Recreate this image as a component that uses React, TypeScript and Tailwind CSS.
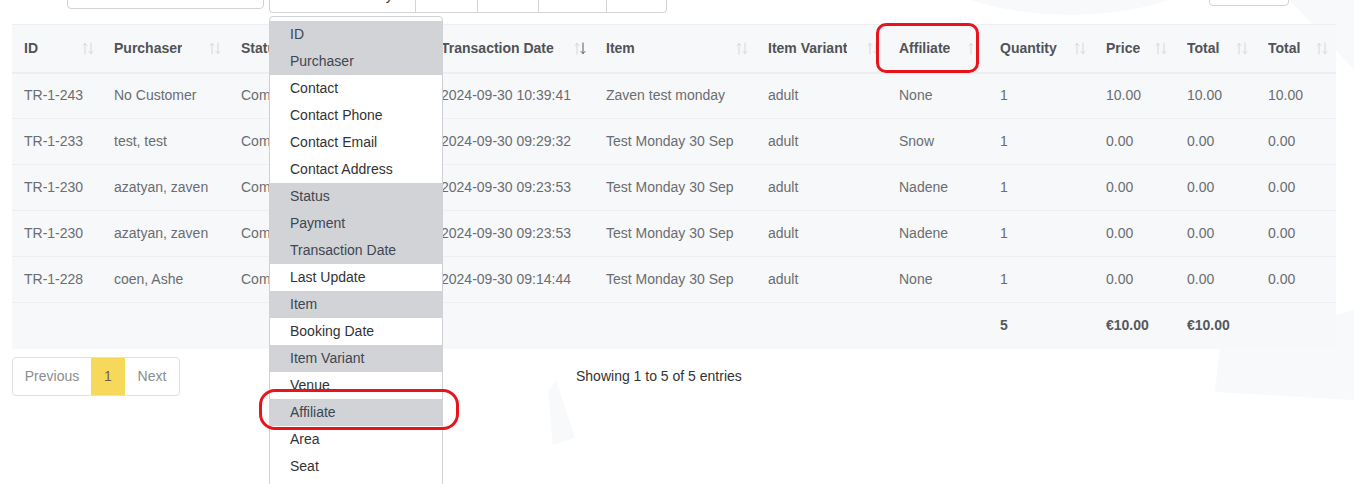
import React from "react";

type Col = { label: string; width: number; sort: "both" | "desc" | "up" };

const columns: Col[] = [
  { label: "ID", width: 90, sort: "both" },
  { label: "Purchaser", width: 127, sort: "both" },
  { label: "Status", width: 200, sort: "both" },
  { label: "Transaction Date", width: 165, sort: "desc" },
  { label: "Item", width: 162, sort: "both" },
  { label: "Item Variant", width: 131, sort: "both" },
  { label: "Affiliate", width: 101, sort: "up" },
  { label: "Quantity", width: 106, sort: "both" },
  { label: "Price", width: 81, sort: "both" },
  { label: "Total", width: 81, sort: "both" },
  { label: "Total", width: 80, sort: "both" },
];

const rows = [
  ["TR-1-243", "No Customer", "Completed", "2024-09-30 10:39:41", "Zaven test monday", "adult", "None", "1", "10.00", "10.00", "10.00"],
  ["TR-1-233", "test, test", "Completed", "2024-09-30 09:29:32", "Test Monday 30 Sep", "adult", "Snow", "1", "0.00", "0.00", "0.00"],
  ["TR-1-230", "azatyan, zaven", "Completed", "2024-09-30 09:23:53", "Test Monday 30 Sep", "adult", "Nadene", "1", "0.00", "0.00", "0.00"],
  ["TR-1-230", "azatyan, zaven", "Completed", "2024-09-30 09:23:53", "Test Monday 30 Sep", "adult", "Nadene", "1", "0.00", "0.00", "0.00"],
  ["TR-1-228", "coen, Ashe", "Completed", "2024-09-30 09:14:44", "Test Monday 30 Sep", "adult", "None", "1", "0.00", "0.00", "0.00"],
];

const menu: [string, boolean][] = [
  ["ID", true],
  ["Purchaser", true],
  ["Contact", false],
  ["Contact Phone", false],
  ["Contact Email", false],
  ["Contact Address", false],
  ["Status", true],
  ["Payment", true],
  ["Transaction Date", true],
  ["Last Update", false],
  ["Item", true],
  ["Booking Date", false],
  ["Item Variant", true],
  ["Venue", false],
  ["Affiliate", true],
  ["Area", false],
  ["Seat", false],
  ["Row", false],
];

function SortIcon({ sort }: { sort: Col["sort"] }) {
  const down = sort === "desc" ? "#555a60" : "#d4d6da";
  return (
    <svg width="12" height="13" viewBox="0 0 12 13" className="shrink-0">
      <g fill="none" strokeWidth="1" strokeLinecap="round">
        <path d="M3 12V1.5M1 3.5L3 1.5L5 3.5" stroke="#d4d6da" />
        {sort !== "up" && <path d="M9 1v10.5M7 9.5l2 2 2-2" stroke={down} />}
      </g>
    </svg>
  );
}

export default function App() {
  return (
    <div className="relative w-[1354px] h-[484px] overflow-hidden bg-white font-['Liberation_Sans',Arial,sans-serif] text-[14px]">
      {/* faint watermark behind the page */}
      <svg className="absolute inset-0" width="1354" height="484" viewBox="0 0 1354 484">
        <g fill="#f8f9fb">
          <ellipse cx="1070" cy="-150" rx="240" ry="165" />
          <path d="M1290 0L1354 0L1354 70Z" />
          <path d="M548 392L556 380L575 438L553 445Z" />
          <path d="M1220 345L1354 310L1354 400L1215 392Z" />
        </g>
      </svg>

      <div className="relative pt-px">
        {/* toolbar, scrolled partly out of view */}
        <div className="flex items-start -mt-[22px] h-[37px]">
          <div className="ml-[67px] w-[197px] h-[30px] border border-[#d2d4d8] rounded-[4px] bg-white" />
          <div className="ml-[5px] flex h-[34px] border border-[#d2d4d8] rounded-[4px] bg-white text-[#333] text-[14px] leading-[16px]">
            {[
              ["Column visibility", 146],
              ["CSV", 62],
              ["PDF", 61],
              ["Excel", 68],
              ["Print", 60],
            ].map(([label, w], i) => (
              <div
                key={label as string}
                style={{ width: (w as number) - (i === 0 ? 1 : 0) }}
                className={`flex items-end justify-center pb-[9px] ${i > 0 ? "border-l border-[#d2d4d8]" : ""}`}
              >
                {label}
              </div>
            ))}
          </div>
          <div className="ml-auto mr-[65px] w-[80px] h-[27px] border border-[#d2d4d8] rounded-[4px] bg-white" />
        </div>

        {/* table */}
        <div className="mx-[12px] mt-[8px]">
          <table className="table-fixed w-[1324px] border-collapse bg-[#f7f8fa]/95">
            <colgroup>
              {columns.map((c, i) => (
                <col key={i} style={{ width: c.width }} />
              ))}
            </colgroup>
            <thead>
              <tr className="h-[48px] border-t border-[#eceef1] border-b-2 border-b-[#eceef1]">
                {columns.map((c, i) => (
                  <th key={i} className="pl-[12px] pr-[8px] text-left align-middle">
                    <div className="flex items-center justify-between font-bold text-[14px] text-[#505357]">
                      <span className="truncate">{c.label}</span>
                      <SortIcon sort={c.sort} />
                    </div>
                  </th>
                ))}
              </tr>
            </thead>
            <tbody>
              {rows.map((r, ri) => (
                <tr key={ri} className="h-[46px] border-b border-[#eceef1]">
                  {r.map((v, ci) => (
                    <td key={ci} className="pl-[12px] text-[#6a6d71] whitespace-nowrap overflow-hidden">
                      {v}
                    </td>
                  ))}
                </tr>
              ))}
            </tbody>
            <tfoot>
              <tr className="h-[46px]">
                <td colSpan={7} />
                <td className="pl-[12px] font-bold text-[#55585c]">5</td>
                <td className="pl-[12px] font-bold text-[#55585c]">€10.00</td>
                <td className="pl-[12px] font-bold text-[#55585c]">€10.00</td>
                <td />
              </tr>
            </tfoot>
          </table>
        </div>

        {/* pagination + info */}
        <div className="flex items-center mt-[8px] ml-[12px]">
          <div className="flex h-[39px] border border-[#dfe1e4] rounded-[4px] overflow-hidden text-[14px] text-[#8a8d91] bg-white">
            <div className="w-[78px] flex items-center justify-center">Previous</div>
            <div className="w-[34px] flex items-center justify-center bg-[#f6d95b] text-[#6b6440]">1</div>
            <div className="w-[54px] flex items-center justify-center">Next</div>
          </div>
          <div className="ml-[396px] text-[#333]">Showing 1 to 5 of 5 entries</div>
        </div>
      </div>

      {/* column visibility dropdown */}
      <div className="absolute left-[269px] top-[16px] w-[174px] h-[490px] bg-white border border-[#cfd1d5] rounded-t-[4px] pt-[4px]">
        {menu.map(([label, active]) => (
          <div
            key={label}
            className={`h-[27px] flex items-center pl-[20px] ${active ? "bg-[#d2d3d7] text-[#3d4652]" : "text-[#333]"}`}
          >
            {label}
          </div>
        ))}
      </div>

      {/* red annotations */}
      <div className="absolute left-[876px] top-[23px] w-[103px] h-[50px] border-[3px] border-[#e8141c] rounded-[10px]" />
      <div className="absolute left-[259px] top-[389px] w-[200px] h-[41px] border-[3px] border-[#e8141c] rounded-[16px]" />
    </div>
  );
}
